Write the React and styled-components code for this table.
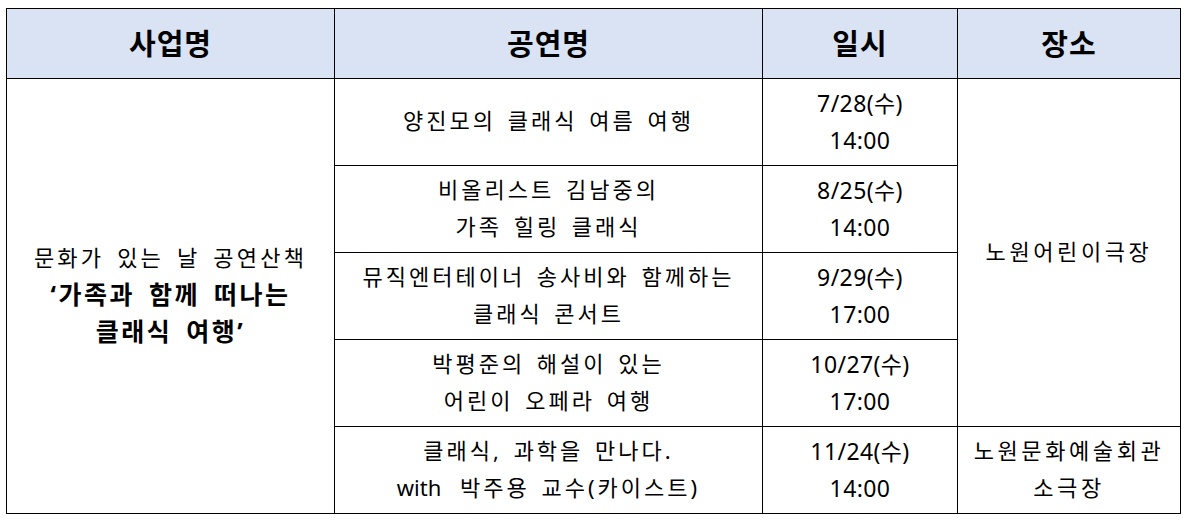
import React from "react";
import styled, { createGlobalStyle } from "styled-components";

const Global = createGlobalStyle`
  html, body { margin: 0; padding: 0; background: #fff; }
  body {
    font-family: "Noto Sans", "Noto Sans CJK KR", sans-serif;
    color: #000;
  }
`;

const Page = styled.div`
  padding: 8px 0 0 6px;
`;

const Table = styled.table`
  border-collapse: collapse;
  table-layout: fixed;
  width: 1174px;
`;

const HeadCell = styled.th`
  background: #dae3f3;
  border: 1px solid #000;
  height: 66px;
  padding: 0 0 3px;
  font-size: 29px;
  font-weight: 700;
  text-align: center;
  vertical-align: middle;
  letter-spacing: 1px;
`;

const Cell = styled.td`
  border: 1px solid #000;
  height: ${(p) => 86 - (p.$pb ?? 3)}px;
  padding: 0 0 ${(p) => p.$pb ?? 3}px;
  font-size: ${(p) => p.$size || 22}px;
  line-height: 37px;
  text-align: center;
  vertical-align: middle;
  letter-spacing: ${(p) => p.$ls || 0}px;
  word-spacing: ${(p) => p.$ws || 0}px;
  font-weight: 400;
  white-space: nowrap;
`;

const Strong = styled.span`
  font-weight: 700;
  font-size: 25px;
  letter-spacing: 2.5px;
  word-spacing: 5px;
  display: block;
`;

const Line = styled.span`
  display: block;
`;

const Latin = styled.span`
  letter-spacing: 0;
  margin-right: 7px;
`;

const rows = [
  { title: ["양진모의 클래식 여름 여행"], date: ["7/28(수)", "14:00"] },
  { title: ["비올리스트 김남중의", "가족 힐링 클래식"], date: ["8/25(수)", "14:00"] },
  { title: ["뮤직엔터테이너 송사비와 함께하는", "클래식 콘서트"], date: ["9/29(수)", "17:00"] },
  { title: ["박평준의 해설이 있는", "어린이 오페라 여행"], date: ["10/27(수)", "17:00"] },
  {
    title: [
      "클래식, 과학을 만나다.",
      <>
        <Latin>with</Latin> 박주용 교수(카이스트)
      </>,
    ],
    date: ["11/24(수)", "14:00"],
  },
];

export default function App() {
  return (
    <>
      <Global />
      <Page>
        <Table>
          <colgroup>
            <col style={{ width: 328 }} />
            <col style={{ width: 428 }} />
            <col style={{ width: 195 }} />
            <col style={{ width: 223 }} />
          </colgroup>
          <thead>
            <tr>
              <HeadCell>사업명</HeadCell>
              <HeadCell>공연명</HeadCell>
              <HeadCell>일시</HeadCell>
              <HeadCell>장소</HeadCell>
            </tr>
          </thead>
          <tbody>
            {rows.map((r, i) => (
              <tr key={i}>
                {i === 0 && (
                  <Cell rowSpan={5} $ls={3.2} $ws={4}>
                    <Line>문화가 있는 날 공연산책</Line>
                    <Strong>‘가족과 함께 떠나는</Strong>
                    <Strong>클래식 여행’</Strong>
                  </Cell>
                )}
                <Cell $ls={3} $ws={3}>
                  {r.title.map((t, k) => (
                    <Line key={k}>{t}</Line>
                  ))}
                </Cell>
                <Cell $size={23} $ls={0.4} $pb={1}>
                  {r.date.map((t) => (
                    <Line key={t}>{t}</Line>
                  ))}
                </Cell>
                {i === 0 && (
                  <Cell rowSpan={4} $ls={3.6}>
                    <Line>노원어린이극장</Line>
                  </Cell>
                )}
                {i === 4 && (
                  <Cell $ls={3.6}>
                    <Line>노원문화예술회관</Line>
                    <Line>소극장</Line>
                  </Cell>
                )}
              </tr>
            ))}
          </tbody>
        </Table>
      </Page>
    </>
  );
}
